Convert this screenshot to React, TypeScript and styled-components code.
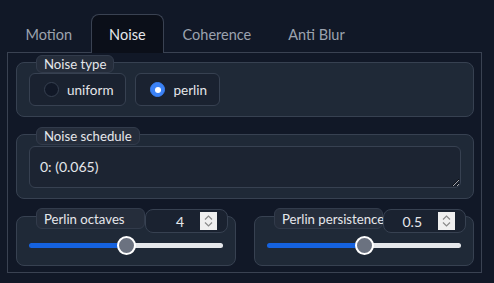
import React from "react";
import styled, { createGlobalStyle } from "styled-components";

const Global = createGlobalStyle`
  html, body { margin: 0; padding: 0; background: #111827; }
  body { font-family: Lato, "Noto Sans", sans-serif; color: #e5e7eb; }
  * { box-sizing: border-box; }
`;

const Page = styled.div`
  width: 494px;
  height: 283px;
  padding: 14px 12px 10px 7px;
`;

const TabBar = styled.div`
  display: flex;
  height: 39px;
  margin-bottom: -1px;
`;

const Tab = styled.button<{ $active?: boolean }>`
  position: relative;
  font-family: inherit;
  font-size: 14.5px;
  height: 39px;
  padding: 0 17.5px;
  background: ${(p) => (p.$active ? "#0b0f19" : "transparent")};
  border: 1px solid ${(p) => (p.$active ? "#3a4252" : "transparent")};
  border-bottom: none;
  border-radius: 8px 8px 0 0;
  color: ${(p) => (p.$active ? "#e5e7eb" : "#9ca3af")};
  cursor: pointer;
`;

const Panel = styled.div`
  width: 475px;
  height: 221px;
  border: 1px solid #3a4252;
  padding: 9px 7px 9px 8px;
  display: flex;
  flex-direction: column;
  gap: 17px;
`;

const Block = styled.div`
  display: flex;
  flex-direction: column;
  background: #1f2937;
  border: 1px solid #374151;
  border-radius: 8px;
  padding: 0 12px 10px;
`;

const BlockLabel = styled.span<{ $top?: number; $h?: number }>`
  align-self: flex-start;
  display: flex;
  align-items: center;
  flex-shrink: 0;
  height: ${(p) => p.$h ?? 18}px;
  margin: ${(p) => -(p.$top ?? 8)}px 0 0 7px;
  padding: 0 7px;
  background: #252d3b;
  border: 1px solid #323b4b;
  border-radius: 6px;
  font-size: 13.2px;
  color: #e5e7eb;
  white-space: nowrap;
`;

const RadioRow = styled.div`
  display: flex;
  gap: 9px;
`;

const RadioOption = styled.label`
  display: flex;
  align-items: center;
  gap: 8px;
  height: 33px;
  padding: 0 12px 0 14px;
  background: #1a2230;
  border: 1px solid #374151;
  border-radius: 6px;
  font-size: 13.5px;
  color: #e5e7eb;
`;

const RadioDot = styled.span<{ $checked?: boolean }>`
  width: 15px;
  height: 15px;
  border-radius: 50%;
  display: flex;
  align-items: center;
  justify-content: center;
  background: ${(p) => (p.$checked ? "#3b82f6" : "#111827")};
  border: 1px solid ${(p) => (p.$checked ? "#3b82f6" : "#374151")};
  &::after {
    content: "";
    display: ${(p) => (p.$checked ? "block" : "none")};
    width: 6px;
    height: 6px;
    border-radius: 50%;
    background: #fff;
  }
`;

const TextArea = styled.textarea`
  width: 100%;
  height: 42px;
  margin-top: 1px;
  resize: vertical;
  background: #1c2432;
  border: 1px solid #374151;
  border-radius: 6px;
  color: #e5e7eb;
  font-family: Lato, "Noto Sans", sans-serif;
  font-size: 14px;
  line-height: 20px;
  padding: 10px 10px;
  color-scheme: dark;
  outline: none;
`;

const Row = styled.div`
  display: flex;
  gap: 18px;
`;

const SliderBlock = styled(Block)`
  flex: 1 1 0;
  min-width: 0;
`;

const SliderHeader = styled.div`
  display: grid;
  grid-template-columns: minmax(0, 1fr) 83px;
  align-items: start;
  margin: -9px -5px 0 0;
  height: 25px;
`;

const NumberBox = styled.div`
  display: flex;
  align-items: center;
  width: 83px;
  height: 24px;
  margin-top: 1px;
  background: #1a2230;
  border: 1px solid #374151;
  border-radius: 8px;
  padding: 0 10px 0 8px;
`;

const NumberValue = styled.span`
  flex: 1;
  text-align: right;
  font-size: 14px;
  padding-right: 16px;
  color: #e5e7eb;
`;

const Spinner = styled.span`
  width: 17px;
  height: 18px;
  background: #efefef;
  display: flex;
  align-items: center;
  justify-content: center;
`;

const Range = styled.input`
  -webkit-appearance: none;
  appearance: none;
  width: 100%;
  height: 20px;
  margin: 2px 0 0;
  background: transparent;
  &::-webkit-slider-runnable-track {
    height: 5px;
    border-radius: 3px;
    background: linear-gradient(
      to right,
      #1562df var(--fill),
      #e5e7eb var(--fill)
    );
  }
  &::-webkit-slider-thumb {
    -webkit-appearance: none;
    width: 19px;
    height: 19px;
    border-radius: 50%;
    background: #6b7280;
    border: 2px solid #ffffff;
    margin-top: -7px;
  }
`;

const SpinIcon = () => (
  <svg width="11" height="14" viewBox="0 0 11 14" fill="none">
    <path d="M2 5.5 L5.5 2 L9 5.5" stroke="#8a8a8a" strokeWidth="1.2" />
    <path d="M2 8.5 L5.5 12 L9 8.5" stroke="#8a8a8a" strokeWidth="1.2" />
  </svg>
);

type SliderProps = {
  label: string;
  value: number;
  min: number;
  max: number;
  step: number;
};

const Slider = ({ label, value, min, max, step }: SliderProps) => {
  const pct = ((value - min) / (max - min)) * 100;
  return (
    <SliderBlock>
      <SliderHeader>
        <BlockLabel $top={0} $h={21}>
          {label}
        </BlockLabel>
        <NumberBox>
          <NumberValue>{value}</NumberValue>
          <Spinner>
            <SpinIcon />
          </Spinner>
        </NumberBox>
      </SliderHeader>
      <Range
        type="range"
        min={min}
        max={max}
        step={step}
        defaultValue={value}
        style={{ ["--fill" as any]: `${pct}%` }}
      />
    </SliderBlock>
  );
};

export default function App() {
  const tabs = ["Motion", "Noise", "Coherence", "Anti Blur"];
  return (
    <>
      <Global />
      <Page>
        <TabBar>
          {tabs.map((t) => (
            <Tab key={t} $active={t === "Noise"}>
              {t}
            </Tab>
          ))}
        </TabBar>
        <Panel>
          <Block>
            <BlockLabel>Noise type</BlockLabel>
            <RadioRow>
              <RadioOption>
                <RadioDot />
                uniform
              </RadioOption>
              <RadioOption>
                <RadioDot $checked />
                perlin
              </RadioOption>
            </RadioRow>
          </Block>
          <Block>
            <BlockLabel>Noise schedule</BlockLabel>
            <TextArea defaultValue="0: (0.065)" />
          </Block>
          <Row>
            <Slider label="Perlin octaves" value={4} min={1} max={7} step={1} />
            <Slider label="Perlin persistence" value={0.5} min={0} max={1} step={0.02} />
          </Row>
        </Panel>
      </Page>
    </>
  );
}
